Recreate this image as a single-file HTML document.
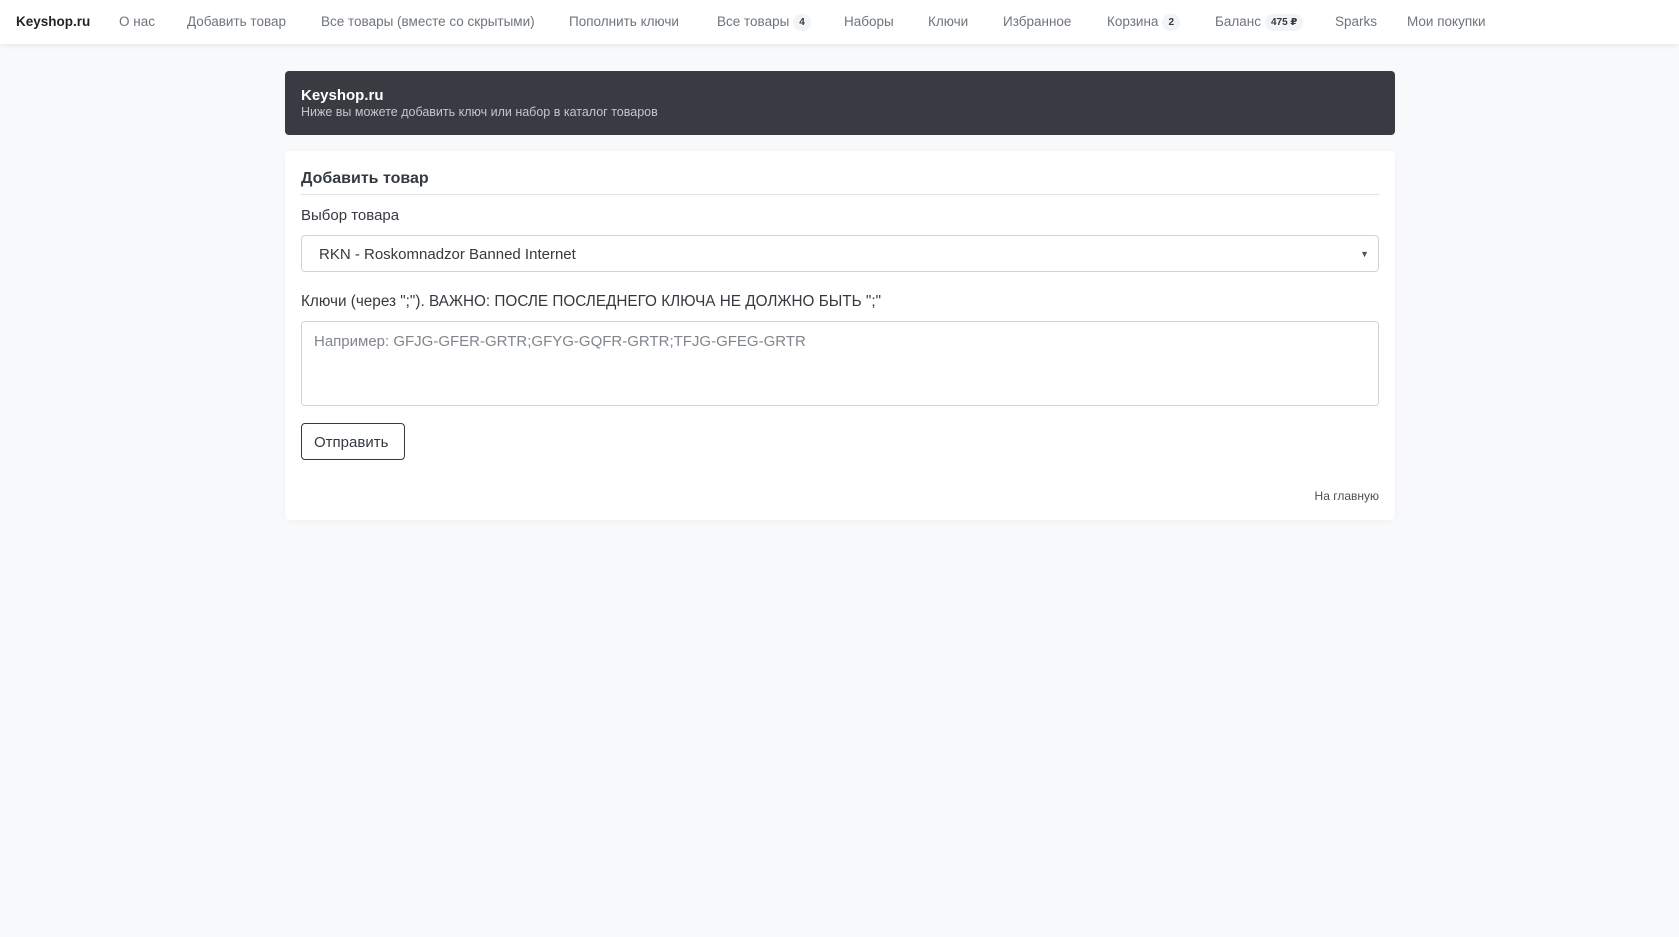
<!DOCTYPE html>
<html><head><meta charset="utf-8"><style>
*{box-sizing:border-box;margin:0;padding:0}
body{width:1679px;height:937px;background:#f8f9fa;font-family:"Liberation Sans","DejaVu Sans",sans-serif;color:#212529;position:relative;overflow:hidden}
.nav{position:absolute;left:0;top:0;width:1679px;height:44px;background:#fff;box-shadow:0 2px 5px rgba(0,0,0,.06)}
.nav span{position:absolute;top:14px;font-size:13.5px;color:#6c757d;white-space:nowrap}
.nav .brand{color:#212529;font-weight:bold}
.badge{display:inline-block;background:#f1f3f5;color:#343a40;font-size:10px;font-weight:bold;border-radius:9px;padding:3px 6px;margin-left:4px;vertical-align:1px}
.hdr{position:absolute;left:285px;top:71px;width:1110px;height:64px;background:#383b42;border-radius:4px;padding:16px 16px;color:#fff}
.hdr b{font-size:15px;display:block;line-height:18px}
.hdr small{font-size:12.5px;color:#c3c6ca;display:block;line-height:14px}
.card{position:absolute;left:285px;top:151px;width:1110px;height:369px;background:#fff;border-radius:4px;box-shadow:0 1px 6px rgba(0,0,0,.04)}
.abs{position:absolute}
.title{left:16px;top:19px;font-size:16px;font-weight:bold;color:#343a40}
.hr{left:16px;right:16px;top:43px;height:1px;background:#dee2e6}
.lbl{left:16px;font-size:15px;color:#343a40}
.sel{left:16px;right:16px;top:84px;height:37px;border:1px solid #ced4da;border-radius:4px;padding:10px 17px;font-size:15px;color:#343a40}
.sel i{position:absolute;right:9px;top:13px;font-style:normal;font-size:9px;color:#555}
.ta{left:16px;right:16px;top:170px;height:85px;border:1px solid #ced4da;border-radius:4px;padding:11px 12px;font-size:15px;color:#80868b}
.btn{left:16px;top:272px;width:104px;height:37px;border:1px solid #343a40;border-radius:4px;font-size:15px;padding:10px 12px;color:#343a40}
.home{right:16px;top:338px;font-size:12px;color:#495057}
</style></head><body>
<div class="nav">
<span class="brand" style="left:16px">Keyshop.ru</span>
<span style="left:119px">О нас</span>
<span style="left:187px">Добавить товар</span>
<span style="left:321px">Все товары (вместе со скрытыми)</span>
<span style="left:569px">Пополнить ключи</span>
<span style="left:717px">Все товары<b class="badge">4</b></span>
<span style="left:844px">Наборы</span>
<span style="left:928px">Ключи</span>
<span style="left:1003px">Избранное</span>
<span style="left:1107px">Корзина<b class="badge">2</b></span>
<span style="left:1215px">Баланс<b class="badge">475 ₽</b></span>
<span style="left:1335px">Sparks</span>
<span style="left:1407px">Мои покупки</span>
</div>
<div class="hdr"><b>Keyshop.ru</b><small>Ниже вы можете добавить ключ или набор в каталог товаров</small></div>
<div class="card">
<div class="abs title">Добавить товар</div>
<div class="abs hr"></div>
<div class="abs lbl" style="top:56px">Выбор товара</div>
<div class="abs sel">RKN - Roskomnadzor Banned Internet<i>▼</i></div>
<div class="abs lbl" style="top:142px;font-size:15.3px">Ключи (через ";"). ВАЖНО: ПОСЛЕ ПОСЛЕДНЕГО КЛЮЧА НЕ ДОЛЖНО БЫТЬ ";"</div>
<div class="abs ta">Например: GFJG-GFER-GRTR;GFYG-GQFR-GRTR;TFJG-GFEG-GRTR</div>
<div class="abs btn">Отправить</div>
<div class="abs home">На главную</div>
</div>
</body></html>
